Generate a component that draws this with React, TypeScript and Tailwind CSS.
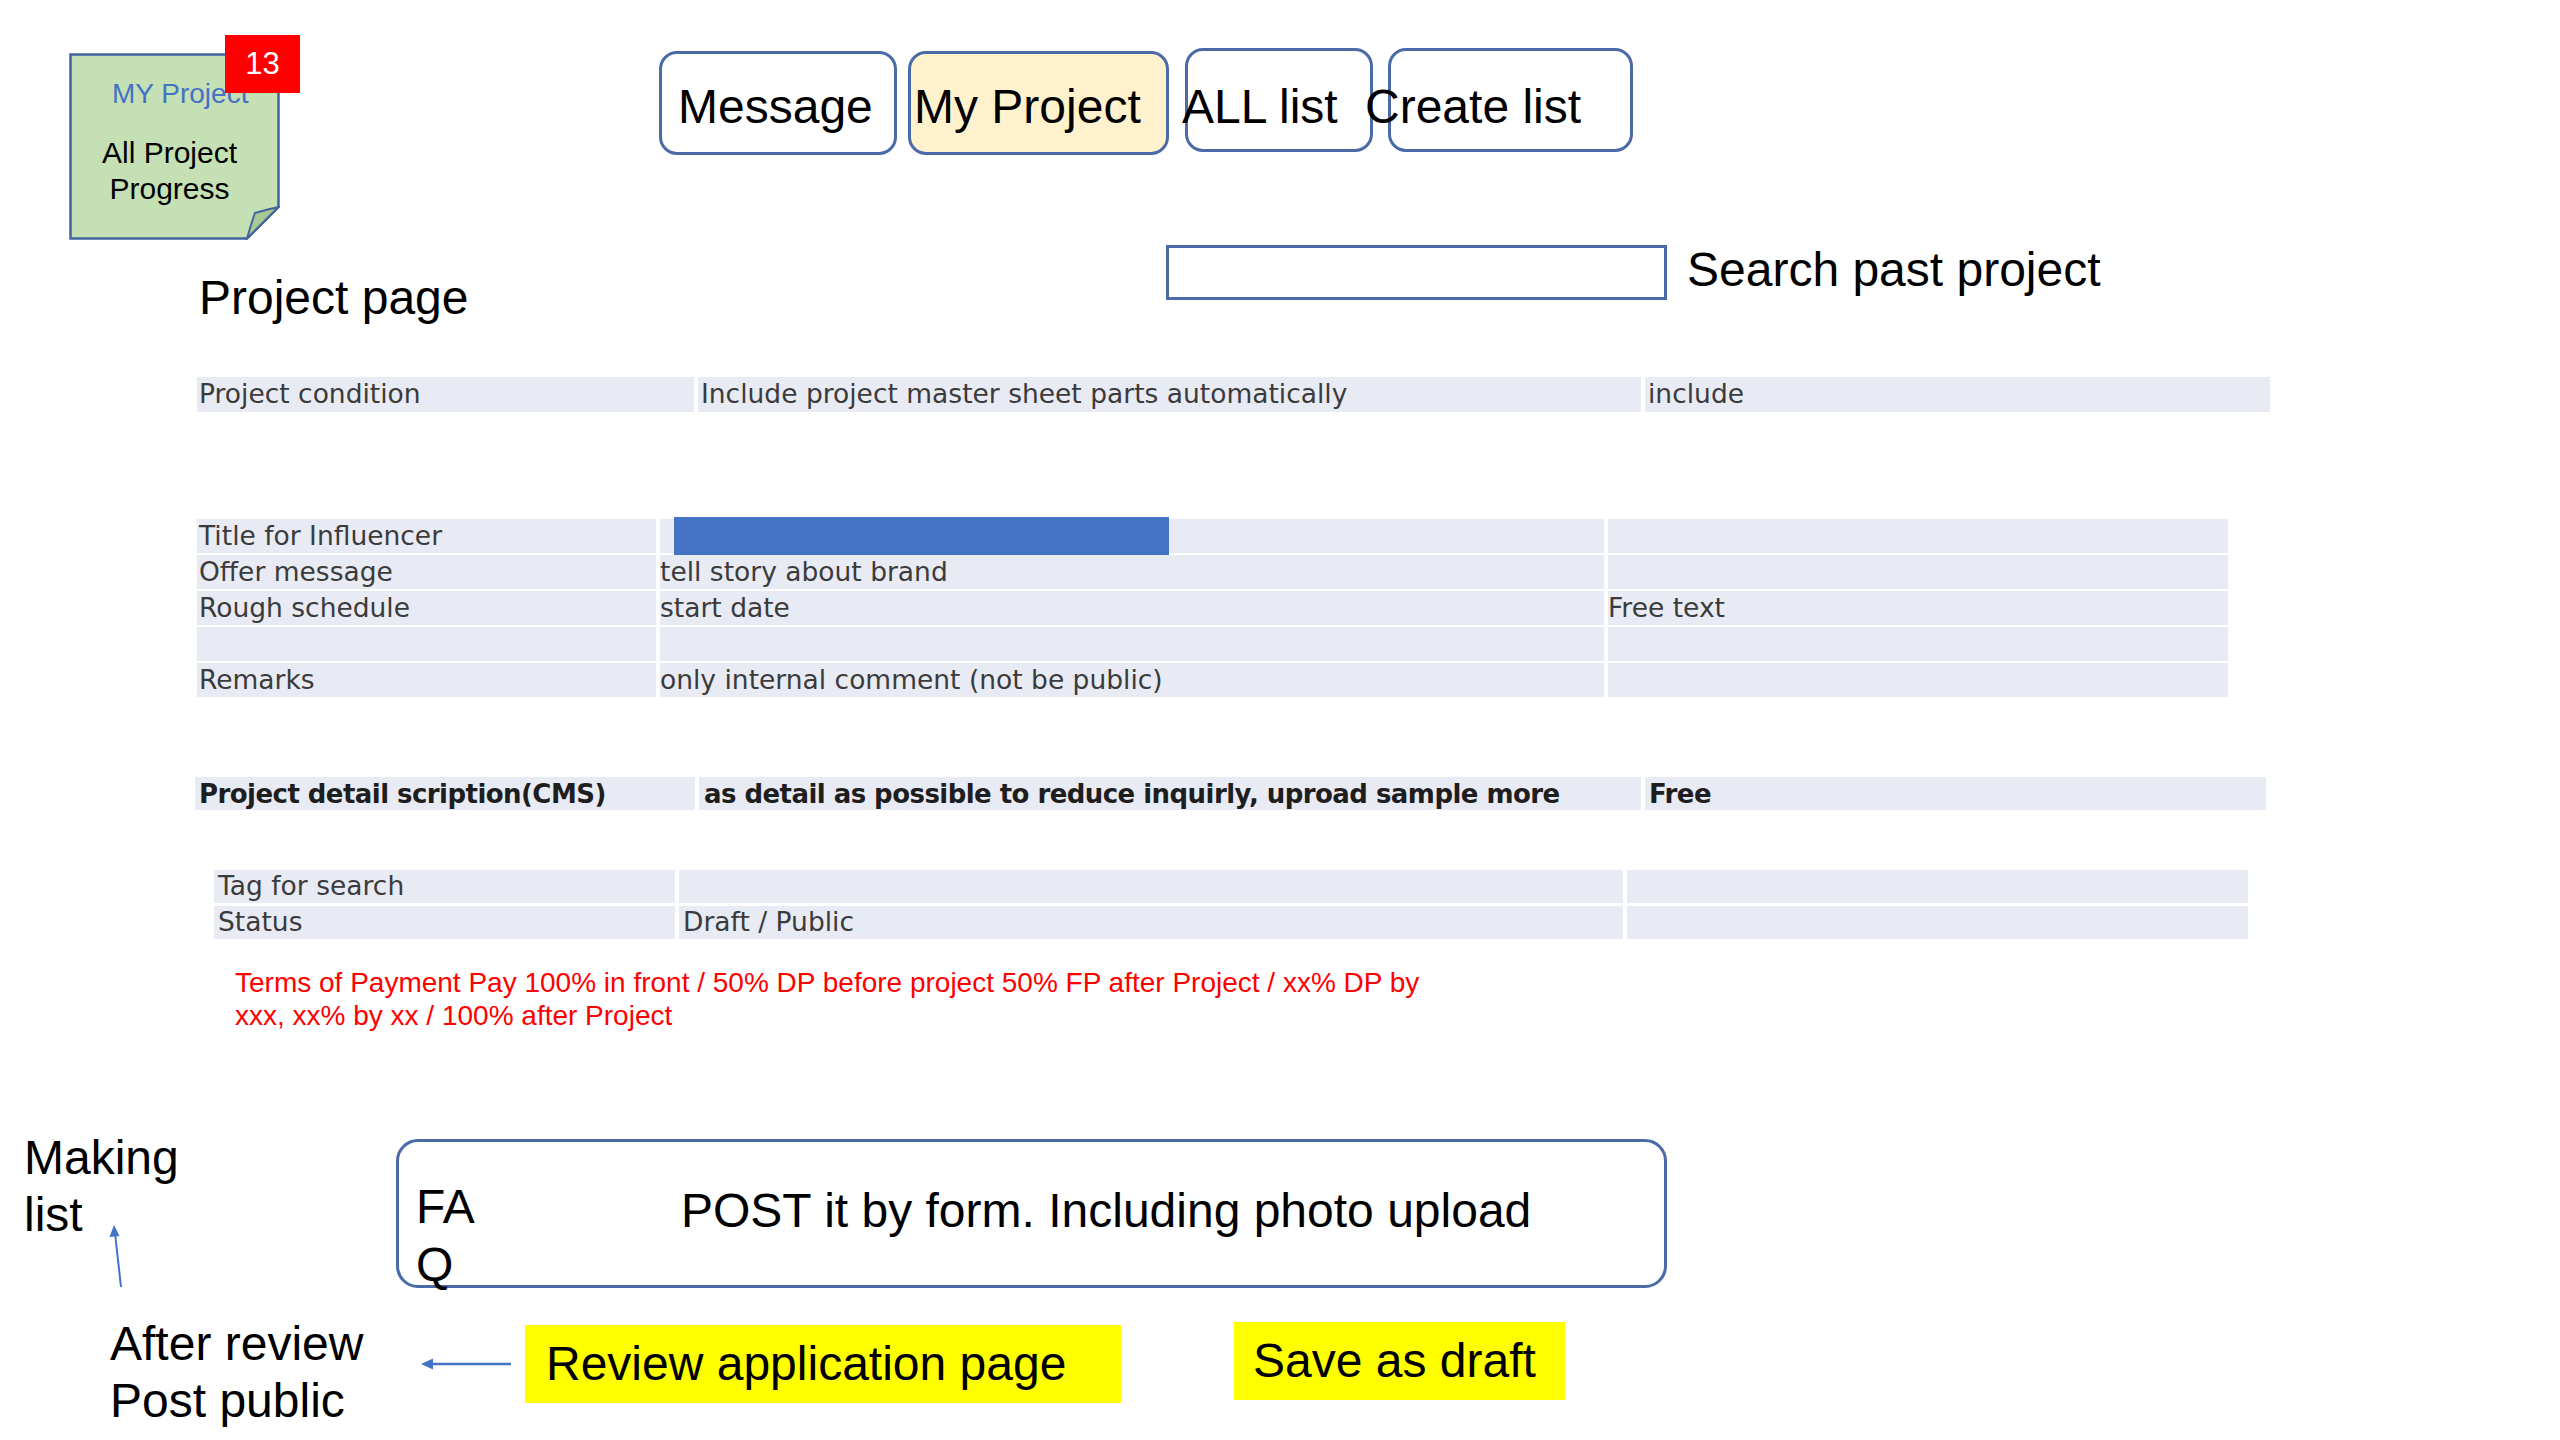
const sans = "font-['Liberation_Sans',Arial,sans-serif]";
const sheet = "font-['DejaVu_Sans',sans-serif]";

interface TabProps {
  label: string;
  box: string;
  text: string;
}

function Tab({ label, box, text }: TabProps) {
  return (
    <div className={`flex h-[104px] items-center rounded-[18px] border-[3px] border-[#4a6aa8] ${box}`}>
      <span className={`whitespace-nowrap text-[48px] leading-none text-black ${text}`}>{label}</span>
    </div>
  );
}

function StickyNote() {
  return (
    <div className="relative mt-[2px] ml-[69px] h-[187px] w-[211px]">
      <svg className="absolute inset-0" width="211" height="187" viewBox="0 0 211 187">
        <path d="M1.5 1.5 H209.5 V154 L178 185.5 H1.5 Z" fill="#c5e0b4" stroke="#41649f" strokeWidth="2.5" />
        <path d="M178 185.5 Q183 168 186 160 Q196 157 209.5 154 Z" fill="#a9c896" stroke="#41649f" strokeWidth="2" />
      </svg>
      <div className="relative flex flex-col pt-[26px]">
        <div className="ml-[43px] whitespace-nowrap text-[28px] leading-[30px] text-[#4472c4]">MY Project</div>
        <div className="mt-[26px] pr-[10px] text-center text-[30px] leading-[36px] text-black">
          All Project
          <br />
          Progress
        </div>
      </div>
      <div className="absolute top-[-18px] left-[156px] flex h-[58px] w-[75px] items-center justify-center bg-[#ff0000] text-[31px] text-white">
        13
      </div>
    </div>
  );
}

export default function App() {
  return (
    <div className={`flex h-[1440px] w-[2560px] flex-col overflow-hidden bg-white ${sans}`}>
      {/* header */}
      <div className="mt-[51px] flex items-start">
        <StickyNote />
        <div className="ml-[379px] flex items-start">
          <Tab label="Message" box="w-[238px] bg-white" text="pt-[8px] pl-[16px]" />
          <Tab label="My Project" box="ml-[11px] w-[261px] bg-[#fff2cc]" text="pt-[8px] pl-[3px]" />
          <Tab label="ALL list" box="ml-[16px] -mt-[3px] w-[188px] bg-white" text="pt-[14px] -ml-[6px]" />
          <Tab label="Create list" box="ml-[15px] -mt-[3px] w-[245px] bg-white" text="pt-[14px] -ml-[26px]" />
        </div>
      </div>

      {/* title + search */}
      <div className="mt-[5px] flex items-start">
        <div className="w-[1166px] pt-[29px] pl-[199px] text-[48px] leading-none text-black">Project page</div>
        <div className="h-[55px] w-[501px] border-[3px] border-[#4a6aa8] bg-white" />
        <div className="ml-[20px] flex h-[50px] items-center text-[48px] leading-none text-black">Search past project</div>
      </div>

      {/* project condition */}
      <div className={`mt-[55px] ml-[197px] flex h-[35px] gap-[4px] text-[26.5px] leading-none text-[#3b3b3b] ${sheet}`}>
        <div className="flex w-[497px] items-center bg-[#e8eaf4] pl-[2px]">Project condition</div>
        <div className="flex w-[943px] items-center bg-[#e8eaf4] pl-[3px]">Include project master sheet parts automatically</div>
        <div className="flex w-[625px] items-center bg-[#e8eaf4] pl-[3px]">include</div>
      </div>

      {/* influencer rows */}
      <div className={`mt-[107px] ml-[197px] flex flex-col gap-[2px] text-[26.5px] leading-none text-[#3b3b3b] ${sheet}`}>
        <div className="flex h-[34px] gap-[4px]">
          <div className="flex w-[459px] items-center bg-[#e8eaf4] pl-[2px]">Title for Influencer</div>
          <div className="flex w-[944px] items-center bg-[#e8eaf4] pl-[14px]">
            <div className="h-[38px] w-[495px] bg-[#4472c4]" />
          </div>
          <div className="w-[620px] bg-[#e8eaf4]" />
        </div>
        <div className="flex h-[34px] gap-[4px]">
          <div className="flex w-[459px] items-center bg-[#e8eaf4] pl-[2px]">Offer message</div>
          <div className="flex w-[944px] items-center bg-[#e8eaf4]">tell story about brand</div>
          <div className="w-[620px] bg-[#e8eaf4]" />
        </div>
        <div className="flex h-[34px] gap-[4px]">
          <div className="flex w-[459px] items-center bg-[#e8eaf4] pl-[2px]">Rough schedule</div>
          <div className="flex w-[944px] items-center bg-[#e8eaf4]">start date</div>
          <div className="flex w-[620px] items-center bg-[#e8eaf4]">Free text</div>
        </div>
        <div className="flex h-[34px] gap-[4px]">
          <div className="w-[459px] bg-[#e8eaf4]" />
          <div className="w-[944px] bg-[#e8eaf4]" />
          <div className="w-[620px] bg-[#e8eaf4]" />
        </div>
        <div className="flex h-[34px] gap-[4px]">
          <div className="flex w-[459px] items-center bg-[#e8eaf4] pl-[2px]">Remarks</div>
          <div className="flex w-[944px] items-center bg-[#e8eaf4]">only internal comment (not be public)</div>
          <div className="w-[620px] bg-[#e8eaf4]" />
        </div>
      </div>

      {/* CMS */}
      <div className={`mt-[80px] ml-[195px] flex h-[33px] gap-[4px] text-[26px] leading-none font-bold tracking-[-0.55px] text-[#1e1e1e] ${sheet}`}>
        <div className="flex w-[500px] items-center bg-[#e8eaf4] pl-[4px]">Project detail scription(CMS)</div>
        <div className="flex w-[942px] items-center bg-[#e8eaf4] pl-[5px]">as detail as possible to reduce inquirly, uproad sample more</div>
        <div className="flex w-[621px] items-center bg-[#e8eaf4] pl-[4px]">Free</div>
      </div>

      {/* tag / status */}
      <div className={`mt-[60px] ml-[214px] flex flex-col gap-[3px] text-[26.5px] leading-none text-[#3b3b3b] ${sheet}`}>
        <div className="flex h-[33px] gap-[4px]">
          <div className="flex w-[461px] items-center bg-[#e8eaf4] pl-[4px]">Tag for search</div>
          <div className="w-[944px] bg-[#e8eaf4]" />
          <div className="w-[621px] bg-[#e8eaf4]" />
        </div>
        <div className="flex h-[33px] gap-[4px]">
          <div className="flex w-[461px] items-center bg-[#e8eaf4] pl-[4px]">Status</div>
          <div className="flex w-[944px] items-center bg-[#e8eaf4] pl-[4px]">Draft / Public</div>
          <div className="w-[621px] bg-[#e8eaf4]" />
        </div>
      </div>

      <div className="mt-[27px] ml-[235px] text-[28px] leading-[33px] text-[#ff0000]">
        Terms of Payment Pay 100% in front / 50% DP before project 50% FP after Project / xx% DP by
        <br />
        xxx, xx% by xx / 100% after Project
      </div>

      {/* FAQ row */}
      <div className="mt-[97px] flex items-start">
        <div className="relative w-[396px] shrink-0">
          <div className="pl-[24px] text-[48px] leading-[57px] text-black">
            Making
            <br />
            list
          </div>
          <svg className="absolute top-[94px] left-[106px]" width="22" height="66" viewBox="0 0 22 66">
            <line x1="15" y1="64" x2="9" y2="10" stroke="#4472c4" strokeWidth="2" />
            <path d="M8 2 L3.5 14 L13.5 13 Z" fill="#4472c4" />
          </svg>
        </div>
        <div className="mt-[10px] flex h-[149px] w-[1271px] items-start rounded-[22px] border-[3px] border-[#4a6aa8] pt-[36px] pl-[17px] text-[48px] leading-[58px] text-black">
          <div className="w-[265px]">
            FA
            <br />
            Q
          </div>
          <div className="mt-[4px] whitespace-nowrap">POST it by form. Including photo upload</div>
        </div>
      </div>

      {/* review row */}
      <div className="mt-[27px] flex items-start">
        <div className="w-[419px] shrink-0 pl-[110px] text-[48px] leading-[57px] text-black">
          After review
          <br />
          Post public
        </div>
        <svg className="mt-[41px]" width="92" height="16" viewBox="0 0 92 16">
          <line x1="92" y1="8" x2="12" y2="8" stroke="#4472c4" strokeWidth="2.5" />
          <path d="M2 8 L14 2.5 L14 13.5 Z" fill="#4472c4" />
        </svg>
        <div className="mt-[10px] ml-[14px] flex h-[78px] w-[596px] items-center bg-[#ffff00] pl-[21px] text-[48px] leading-none text-black">
          Review application page
        </div>
        <div className="mt-[7px] ml-[113px] flex h-[78px] w-[331px] items-center bg-[#ffff00] pl-[19px] text-[48px] leading-none text-black">
          Save as draft
        </div>
      </div>
    </div>
  );
}
